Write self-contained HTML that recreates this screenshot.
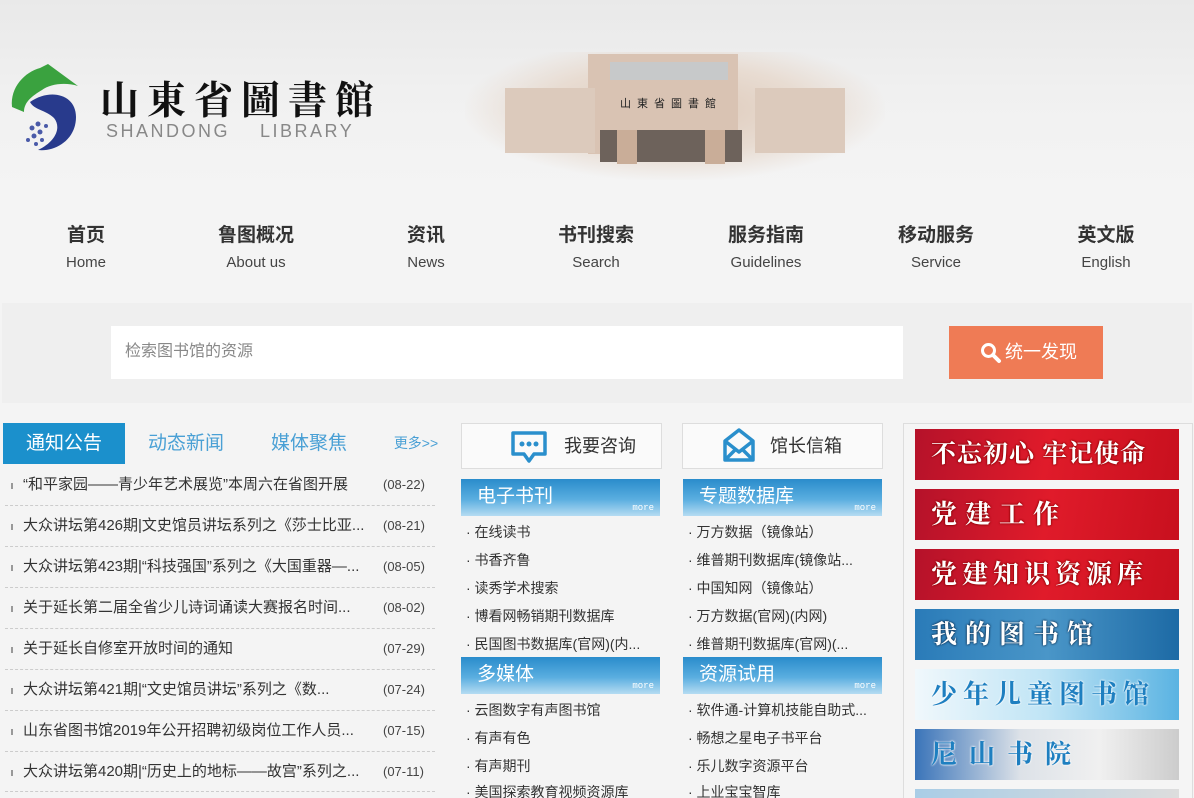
<!DOCTYPE html>
<html><head><meta charset="utf-8"><style>
*{margin:0;padding:0;box-sizing:border-box}
html,body{width:1194px;height:798px;overflow:hidden}
body{background:#f4f4f4;font-family:"Liberation Sans","Noto Sans CJK SC",sans-serif}
#w{position:relative;width:1194px;height:798px;overflow:hidden}
.abs{position:absolute}
#hdr{left:0;top:0;width:1194px;height:200px;background:linear-gradient(#e9e9e9,#f2f2f2 60%,#f4f4f4)}
.nav{position:absolute;top:222px;width:140px;text-align:center;color:#333}
.nav b{display:block;font-size:19px;line-height:28px}
.nav span{display:block;font-size:15px;color:#444;margin-top:4px}
.tab{position:absolute;top:423px;height:41px;line-height:41px;font-size:19px;color:#4aa0d5;text-align:center}
.li{position:absolute;left:5px;width:430px;height:41px;border-bottom:1px dashed #ccc;font-size:15px;color:#333;line-height:40px}
.li i{position:absolute;left:6px;top:18px;width:2px;height:6px;background:#999}
.li .t{position:absolute;left:18px}
.li .d{position:absolute;left:378px;font-size:13px;color:#444}
.box{position:absolute;top:423px;width:201px;height:46px;background:#fafafa;border:1px solid #ddd;font-size:18px;color:#333;line-height:44px}
.bar{position:absolute;width:199px;height:37px;background:linear-gradient(#2a8ccb,#5aaee0 55%,#b5dcf2);color:#fff;font-size:19px;line-height:36px;padding-left:16px}
.bar em{position:absolute;right:6px;bottom:3px;font-style:normal;font-size:9px;line-height:10px;font-family:"Liberation Mono",monospace}
.it{position:absolute;font-size:14px;color:#333;white-space:nowrap;height:14px;line-height:16px;overflow:visible}
.bn{position:absolute;left:915px;width:264px;height:51px;font-family:"Liberation Serif","Noto Serif CJK SC",serif;font-weight:bold;font-size:26px;color:#fff;line-height:51px;padding-left:16px;letter-spacing:4px;white-space:nowrap;overflow:hidden;text-shadow:0 0 2px #800,0 0 2px #800}
.red{background:linear-gradient(100deg,#b5122a,#e01b2a 50%,#c8101e)}
</style></head><body><div id="w">
<div id="hdr" class="abs"></div>
<svg class="abs" style="left:10px;top:62px" width="72" height="95" viewBox="0 0 72 95">
<path d="M2 45 C0 25 15 10 30 6 L38 2 L68 24 C55 20 40 22 32 28 C22 34 14 40 14 50 Z" fill="#3aa23f"/>
<path d="M20 40 C40 26 66 32 66 55 C66 78 45 90 28 88 C45 80 52 66 44 56 C36 48 24 48 20 40 Z" fill="#283a8c"/>
<g fill="#4a5aa8"><circle cx="28" cy="62" r="2.5"/><circle cx="22" cy="66" r="2.5"/><circle cx="30" cy="70" r="2.5"/><circle cx="24" cy="74" r="2.5"/><circle cx="32" cy="78" r="2"/><circle cx="26" cy="82" r="2"/><circle cx="36" cy="64" r="2"/><circle cx="18" cy="78" r="2"/></g>
</svg>
<div class="abs" style="left:100px;top:70px;font-family:'Liberation Serif','Noto Serif CJK SC',serif;font-size:39px;font-weight:bold;color:#111;letter-spacing:8px;white-space:nowrap">山東省圖書館</div>
<div class="abs" style="left:106px;top:121px;font-size:18px;color:#888;letter-spacing:2.5px">SHANDONG&nbsp;&nbsp;&nbsp;&nbsp;LIBRARY</div>
<div class="abs" style="left:465px;top:52px;width:420px;height:128px;background:radial-gradient(ellipse at 50% 45%,#ddc8b8 0%,#e8dcd2 45%,rgba(240,240,240,0) 72%)"></div>
<div class="abs" style="left:588px;top:54px;width:150px;height:100px;background:#d9c3b3"></div>
<div class="abs" style="left:610px;top:62px;width:118px;height:18px;background:#c7c9ca"></div>
<div class="abs" style="left:505px;top:88px;width:90px;height:65px;background:#dccabc"></div>
<div class="abs" style="left:755px;top:88px;width:90px;height:65px;background:#dccabc"></div>
<div class="abs" style="left:600px;top:130px;width:142px;height:32px;background:#6d625b"></div>
<div class="abs" style="left:617px;top:130px;width:20px;height:34px;background:#c9ad98"></div>
<div class="abs" style="left:705px;top:130px;width:20px;height:34px;background:#c9ad98"></div>
<div class="abs" style="left:620px;top:95px;font-size:11px;color:#222;letter-spacing:6px">山東省圖書館</div>
<div class="nav" style="left:16px"><b>首页</b><span>Home</span></div>
<div class="nav" style="left:186px"><b>鲁图概况</b><span>About us</span></div>
<div class="nav" style="left:356px"><b>资讯</b><span>News</span></div>
<div class="nav" style="left:526px"><b>书刊搜索</b><span>Search</span></div>
<div class="nav" style="left:696px"><b>服务指南</b><span>Guidelines</span></div>
<div class="nav" style="left:866px"><b>移动服务</b><span>Service</span></div>
<div class="nav" style="left:1036px"><b>英文版</b><span>English</span></div>
<div class="abs" style="left:2px;top:303px;width:1190px;height:100px;background:#efefef"></div>
<div class="abs" style="left:111px;top:326px;width:792px;height:53px;background:#fff;font-size:16px;color:#888;line-height:52px;padding-left:14px">检索图书馆的资源</div>
<div class="abs" style="left:949px;top:326px;width:154px;height:53px;background:#ef7b55;color:#fff;font-size:18px;line-height:52px;padding-left:56px">统一发现</div>
<svg class="abs" style="left:980px;top:342px" width="22" height="22" viewBox="0 0 22 22"><circle cx="8.5" cy="8.5" r="6" fill="none" stroke="#fff" stroke-width="3"/><path d="M13 13 L19 19" stroke="#fff" stroke-width="4" stroke-linecap="round"/></svg>
<div class="tab" style="left:3px;width:122px;background:#1b90cc;color:#fff">通知公告</div>
<div class="tab" style="left:136px;width:100px">动态新闻</div>
<div class="tab" style="left:259px;width:100px">媒体聚焦</div>
<div class="tab" style="left:388px;width:56px;font-size:14px">更多&gt;&gt;</div>
<div class="li" style="top:465px"><i></i><span class="t">“和平家园——青少年艺术展览”本周六在省图开展</span><span class="d">(08-22)</span></div>
<div class="li" style="top:506px"><i></i><span class="t">大众讲坛第426期|文史馆员讲坛系列之《莎士比亚...</span><span class="d">(08-21)</span></div>
<div class="li" style="top:547px"><i></i><span class="t">大众讲坛第423期|“科技强国”系列之《大国重器—...</span><span class="d">(08-05)</span></div>
<div class="li" style="top:588px"><i></i><span class="t">关于延长第二届全省少儿诗词诵读大赛报名时间...</span><span class="d">(08-02)</span></div>
<div class="li" style="top:629px"><i></i><span class="t">关于延长自修室开放时间的通知</span><span class="d">(07-29)</span></div>
<div class="li" style="top:670px"><i></i><span class="t">大众讲坛第421期|“文史馆员讲坛”系列之《数...</span><span class="d">(07-24)</span></div>
<div class="li" style="top:711px"><i></i><span class="t">山东省图书馆2019年公开招聘初级岗位工作人员...</span><span class="d">(07-15)</span></div>
<div class="li" style="top:752px;height:40px"><i></i><span class="t">大众讲坛第420期|“历史上的地标——故宫”系列之...</span><span class="d">(07-11)</span></div>
<div class="box" style="left:461px;padding-left:102px">我要咨询</div>
<svg class="abs" style="left:510px;top:430px" width="38" height="34" viewBox="0 0 38 34"><path d="M3 3 H35 V24 H24 L19 31 L14 24 H3 Z" fill="none" stroke="#2a8fcc" stroke-width="3.5" stroke-linejoin="round"/><circle cx="12" cy="14" r="2.5" fill="#2a8fcc"/><circle cx="19" cy="14" r="2.5" fill="#2a8fcc"/><circle cx="26" cy="14" r="2.5" fill="#2a8fcc"/></svg>
<div class="box" style="left:682px;padding-left:87px">馆长信箱</div>
<svg class="abs" style="left:722px;top:427px" width="34" height="36" viewBox="0 0 34 36"><path d="M3 14 L17 3 L31 14 V33 H3 Z M3 14 L17 25 L31 14 M3 33 L14 22 M31 33 L20 22" fill="none" stroke="#2a8fcc" stroke-width="3.5" stroke-linejoin="round"/></svg>
<div class="bar" style="left:461px;top:479px">电子书刊<em>more</em></div>
<div class="bar" style="left:683px;top:479px">专题数据库<em>more</em></div>
<div class="bar" style="left:461px;top:657px">多媒体<em>more</em></div>
<div class="bar" style="left:683px;top:657px">资源试用<em>more</em></div>
<div class="it" style="left:466px;top:524px">· 在线读书</div>
<div class="it" style="left:466px;top:552px">· 书香齐鲁</div>
<div class="it" style="left:466px;top:580px">· 读秀学术搜索</div>
<div class="it" style="left:466px;top:608px">· 博看网畅销期刊数据库</div>
<div class="it" style="left:466px;top:636px">· 民国图书数据库(官网)(内...</div>
<div class="it" style="left:688px;top:524px">· 万方数据（镜像站）</div>
<div class="it" style="left:688px;top:552px">· 维普期刊数据库(镜像站...</div>
<div class="it" style="left:688px;top:580px">· 中国知网（镜像站）</div>
<div class="it" style="left:688px;top:608px">· 万方数据(官网)(内网)</div>
<div class="it" style="left:688px;top:636px">· 维普期刊数据库(官网)(...</div>
<div class="it" style="left:466px;top:702px">· 云图数字有声图书馆</div>
<div class="it" style="left:466px;top:730px">· 有声有色</div>
<div class="it" style="left:466px;top:758px">· 有声期刊</div>
<div class="it" style="left:466px;top:784px">· 美国探索教育视频资源库</div>
<div class="it" style="left:688px;top:702px">· 软件通-计算机技能自助式...</div>
<div class="it" style="left:688px;top:730px">· 畅想之星电子书平台</div>
<div class="it" style="left:688px;top:758px">· 乐儿数字资源平台</div>
<div class="it" style="left:688px;top:784px">· 上业宝宝智库</div>
<div class="abs" style="left:903px;top:423px;width:290px;height:375px;border:1px solid #ddd;border-bottom:none;background:#f5f5f5"></div>
<div class="bn red" style="top:429px;letter-spacing:1px;font-size:25px">不忘初心 牢记使命</div>
<div class="bn red" style="top:489px;letter-spacing:8px">党建工作</div>
<div class="bn red" style="top:549px;letter-spacing:5px">党建知识资源库</div>
<div class="bn" style="top:609px;background:linear-gradient(90deg,#2a7bb8,#4a96c8 50%,#1d6aa5);letter-spacing:8px;text-shadow:0 0 2px #135,0 0 2px #135">我的图书馆</div>
<div class="bn" style="top:669px;background:linear-gradient(90deg,#f0f8fc,#bfe4f5 50%,#5ab3e2);color:#1e7fc0;text-shadow:0 0 2px #fff,0 0 2px #fff;letter-spacing:6px">少年儿童图书馆</div>
<div class="bn" style="top:729px;background:linear-gradient(90deg,#3a74b9,#dde2e8 40%,#f0f0f0 70%,#ccc);color:#1e7fc0;text-shadow:0 0 2px #fff,0 0 2px #fff;letter-spacing:12px">尼山书院</div>
<div class="bn" style="top:789px;height:9px;background:linear-gradient(90deg,#a9cde6,#ddd)"></div>
</div></body></html>
